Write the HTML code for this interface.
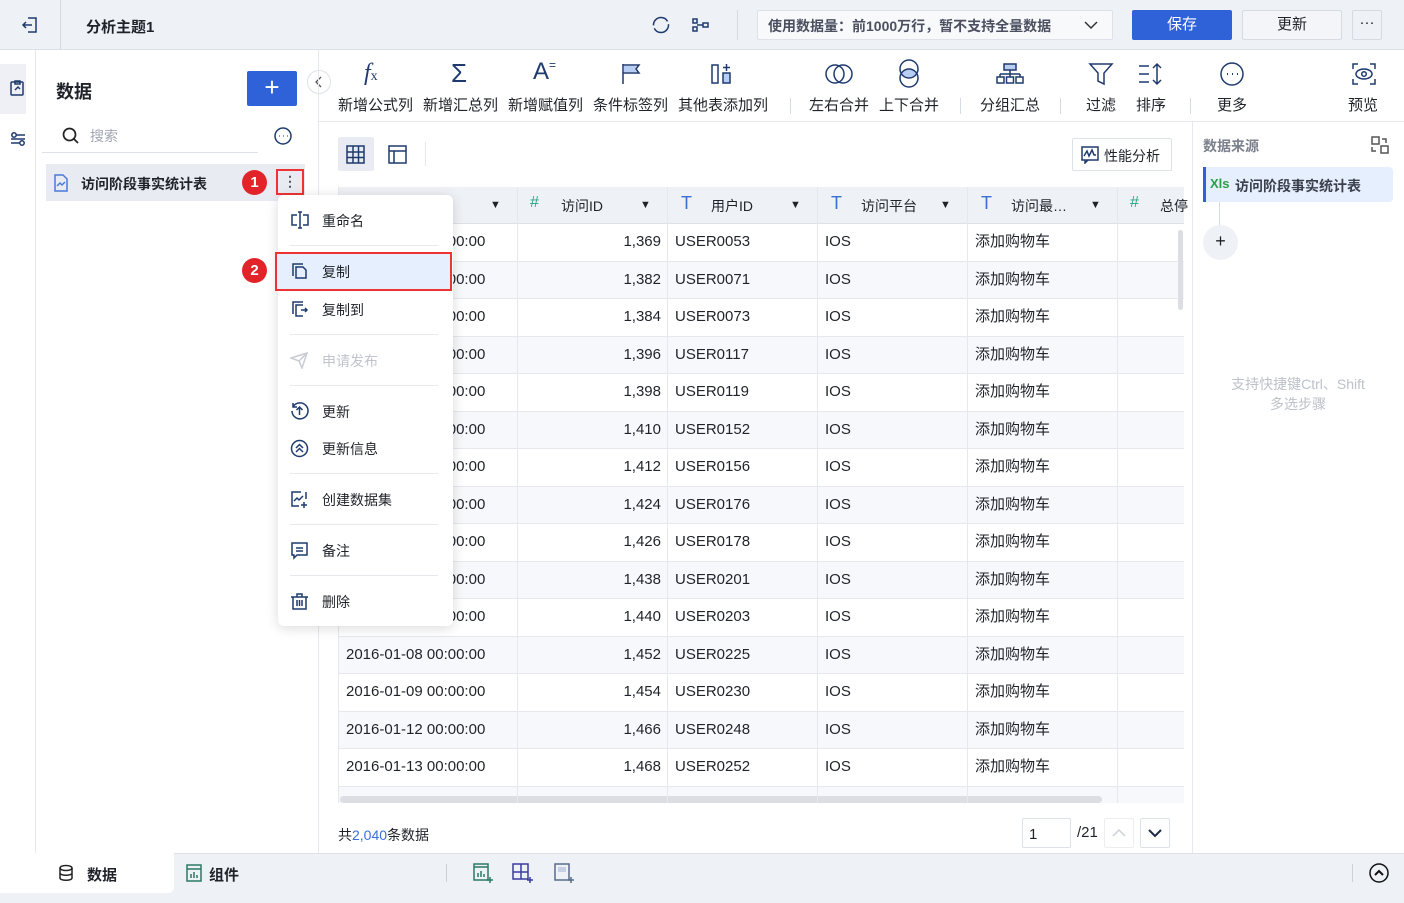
<!DOCTYPE html>
<html><head><meta charset="utf-8"><style>
*{box-sizing:border-box;margin:0;padding:0}
body{width:1404px;height:903px;overflow:hidden;background:#fff;font-family:"Liberation Sans","Noto Sans CJK SC",sans-serif;font-size:14px;color:#1f2329;position:relative}
.a{position:absolute}
svg{position:absolute;fill:none;stroke:#1e3a6e;stroke-width:1.5}
.tb{position:absolute;top:96px;font-size:15px;line-height:20px;color:#1f2329;white-space:nowrap}
.row{position:absolute;left:338px;width:846px;height:37.5px;border-bottom:1px solid #e6e8ee;font-size:15px}
.row.alt{background:#f7f8fb}
.row span{position:absolute;top:0;line-height:36px;white-space:nowrap}
.c1{left:8px}.c2{left:179px;width:144px;text-align:right}.c3{left:337px}.c4{left:487px}.c5{left:637px}
.vl{position:absolute;top:187px;height:616px;width:1px;background:#e6e8ee}
.mi{position:absolute;left:322px;font-size:14px;color:#1f2329}
.dv{position:absolute;left:290px;width:148px;height:1px;background:#e6e8ee}
.hd{position:absolute;top:196px;font-size:14px;white-space:nowrap}
</style></head><body>
<!-- top bar -->
<div class="a" style="left:0;top:0;width:1404px;height:50px;background:#eef1f6;border-bottom:1px solid #dde1e8"></div>
<div class="a" style="left:60px;top:0;width:1px;height:50px;background:#d6dae2"></div>
<svg style="left:20px;top:15px" width="20" height="20" viewBox="0 0 20 20"><path d="M8 3h8v14H8M3 10h9M6 7l-3 3 3 3"/></svg>
<div class="a" style="left:86px;top:16px;font-size:15px;font-weight:bold">分析主题1</div>
<svg style="left:651px;top:15px" width="20" height="20" viewBox="0 0 20 20"><circle cx="10" cy="10" r="7.5" stroke-dasharray="20 3"/></svg>
<svg style="left:691px;top:15px" width="20" height="20" viewBox="0 0 20 20"><rect x="2" y="4" width="4" height="4"/><rect x="2" y="12" width="4" height="4"/><path d="M6 10h6"/><rect x="12" y="8" width="5" height="4"/></svg>
<div class="a" style="left:737px;top:10px;width:1px;height:30px;background:#d6dae2"></div>
<div class="a" style="left:757px;top:10px;width:356px;height:30px;background:#f8f9fb;border:1px solid #dde1e8;border-radius:2px;font-size:14px;color:#4a5060;padding:5px 10px;font-weight:bold">使用数据量：前1000万行，暂不支持全量数据</div>
<svg style="left:1082px;top:16px" width="18" height="18" viewBox="0 0 18 18"><path d="M3 6l6 6 6-6" stroke="#333"/></svg>
<div class="a" style="left:1132px;top:10px;width:100px;height:30px;background:#2f62d8;border-radius:2px;color:#fff;text-align:center;line-height:30px;font-size:15px">保存</div>
<div class="a" style="left:1242px;top:10px;width:100px;height:30px;background:#f4f5f8;border:1px solid #d6dae2;border-radius:2px;text-align:center;line-height:28px;font-size:15px">更新</div>
<div class="a" style="left:1352px;top:10px;width:30px;height:30px;border:1px solid #d6dae2;border-radius:2px;text-align:center;line-height:24px;font-size:15px">···</div>
<!-- left rail -->
<div class="a" style="left:0;top:50px;width:36px;height:803px;background:#fff;border-right:1px solid #e6e8ee"></div>
<div class="a" style="left:0;top:64px;width:26px;height:50px;background:#eef0f5"></div>
<svg style="left:9px;top:79px" width="18" height="18" viewBox="0 0 18 18"><rect x="2" y="3" width="12" height="13" rx="1"/><path d="M6 2h5v3H6zM6 11l3-3 2 2"/></svg>
<svg style="left:9px;top:130px" width="18" height="18" viewBox="0 0 18 18"><circle cx="5" cy="5" r="2.2"/><circle cx="13" cy="13" r="2.2"/><path d="M7 5h9M2 13h9M2 9h14"/></svg>
<!-- left panel -->
<div class="a" style="left:56px;top:78px;font-size:18px;font-weight:bold">数据</div>
<div class="a" style="left:247px;top:71px;width:50px;height:35px;background:#2f62d8;border-radius:2px;color:#fff;text-align:center;line-height:33px;font-size:26px">+</div>
<div class="a" style="left:307px;top:70px;width:24px;height:24px;border:1px solid #dde1e8;border-radius:12px;background:#fff"></div>
<svg style="left:313px;top:76px" width="12" height="12" viewBox="0 0 12 12"><path d="M8 1L3 6l5 5" stroke="#555" stroke-width="1.3"/></svg>
<svg style="left:61px;top:126px" width="20" height="20" viewBox="0 0 20 20"><circle cx="8.5" cy="8.5" r="6" stroke="#222" stroke-width="1.7"/><path d="M13 13l4 4" stroke="#222" stroke-width="1.7"/></svg>
<div class="a" style="left:90px;top:126px;color:#a0a6b1;font-size:14px">搜索</div>
<div class="a" style="left:42px;top:152px;width:216px;height:1px;background:#dde1e8"></div>
<svg style="left:273px;top:126px" width="20" height="20" viewBox="0 0 20 20"><circle cx="10" cy="10" r="8"/><path d="M6 10h.5M10 10h.5M14 10h.5" stroke-width="2"/></svg>
<div class="a" style="left:46px;top:164px;width:259px;height:37px;background:#e8ebf2"></div>
<svg style="left:53px;top:174px" width="16" height="18" viewBox="0 0 16 18"><path d="M2 1h8l4 4v12H2z" stroke="#4a7bd8"/><path d="M4 12l3-3 2 2 3-3" stroke="#4a7bd8"/></svg>
<div class="a" style="left:81px;top:174px;font-size:14px;font-weight:bold">访问阶段事实统计表</div>
<div class="a" style="left:242px;top:170px;width:25px;height:25px;border-radius:13px;background:#e2242a;color:#fff;text-align:center;line-height:25px;font-size:15px;font-weight:bold">1</div>
<div class="a" style="left:276px;top:169px;width:28px;height:26px;border:2px solid #e33;text-align:center;line-height:20px;color:#555;font-weight:bold">⋮</div>
<div class="a" style="left:318px;top:50px;width:1px;height:803px;background:#e6e8ee"></div>
<!-- toolbar -->
<div class="a" style="left:319px;top:121px;width:1085px;height:1px;background:#e6e8ee"></div>
<div class="a" style="left:364px;top:60px;font-size:24px;font-style:italic;font-family:'Liberation Serif',serif;color:#1e3a6e">f<span style="font-size:14px;font-style:normal">x</span></div>
<div class="a" style="left:451px;top:58px;font-size:26px;color:#1e3a6e">Σ</div>
<div class="a" style="left:533px;top:58px;font-size:24px;color:#1e3a6e">A<span style="font-size:12px;vertical-align:top">=</span></div>
<svg style="left:620px;top:62px" width="22" height="24" viewBox="0 0 22 24"><path d="M4 4h13l-2 3 2 3H4z" fill="#b8cdf2" stroke="none"/><path d="M3 2v20M3 3h16l-3 4 3 4H3" /></svg>
<svg style="left:710px;top:62px" width="26" height="24" viewBox="0 0 26 24"><rect x="2" y="3" width="6" height="18"/><rect x="13" y="11" width="7" height="10" fill="#b8cdf2"/><path d="M16.5 2v7M13 5.5h7"/></svg>
<svg style="left:825px;top:61px" width="28" height="26" viewBox="0 0 28 26"><circle cx="10" cy="13" r="9"/><circle cx="18" cy="13" r="9"/></svg>
<svg style="left:896px;top:59px" width="26" height="30" viewBox="0 0 26 30"><ellipse cx="13" cy="14.5" rx="8" ry="4" fill="#b8cdf2" stroke="none"/><circle cx="13" cy="10" r="9"/><circle cx="13" cy="19" r="9"/></svg>
<svg style="left:996px;top:62px" width="28" height="24" viewBox="0 0 28 24"><rect x="8" y="2" width="12" height="6" fill="#b8cdf2"/><path d="M14 8v4M4 12h20M4 12v3M24 12v3M14 12v3"/><rect x="1" y="15" width="7" height="6"/><rect x="20" y="15" width="7" height="6"/><rect x="10.5" y="15" width="7" height="6"/></svg>
<svg style="left:1088px;top:62px" width="26" height="24" viewBox="0 0 26 24"><path d="M2 2h22l-8 9v11l-6-3v-8z"/></svg>
<svg style="left:1137px;top:62px" width="28" height="24" viewBox="0 0 28 24"><path d="M2 4h10M2 12h10M2 20h10M20 2v20M16 6l4-4 4 4M16 18l4 4 4-4"/></svg>
<svg style="left:1219px;top:61px" width="26" height="26" viewBox="0 0 26 26"><circle cx="13" cy="13" r="11"/><path d="M8 13h1M13 13h1M18 13h1" stroke-width="2"/></svg>
<svg style="left:1351px;top:62px" width="26" height="24" viewBox="0 0 26 24"><path d="M2 7V2h5M19 2h5v5M24 17v5h-5M7 22H2v-5"/><ellipse cx="13" cy="12" rx="8" ry="5"/><circle cx="13" cy="12" r="2.3"/></svg>
<div class="tb" style="left:338px">新增公式列</div><div class="tb" style="left:423px">新增汇总列</div><div class="tb" style="left:508px">新增赋值列</div><div class="tb" style="left:593px">条件标签列</div><div class="tb" style="left:678px">其他表添加列</div>
<div class="a" style="left:790px;top:98px;width:1px;height:16px;background:#d6dae2"></div>
<div class="tb" style="left:809px">左右合并</div><div class="tb" style="left:879px">上下合并</div>
<div class="a" style="left:960px;top:98px;width:1px;height:16px;background:#d6dae2"></div>
<div class="tb" style="left:980px">分组汇总</div>
<div class="a" style="left:1060px;top:98px;width:1px;height:16px;background:#d6dae2"></div>
<div class="tb" style="left:1086px">过滤</div><div class="tb" style="left:1136px">排序</div>
<div class="a" style="left:1190px;top:98px;width:1px;height:16px;background:#d6dae2"></div>
<div class="tb" style="left:1217px">更多</div><div class="tb" style="left:1348px">预览</div>
<!-- view toggles -->
<div class="a" style="left:338px;top:137px;width:36px;height:34px;background:#e8ebf2;border-radius:2px"></div>
<svg style="left:346px;top:145px" width="19" height="19" viewBox="0 0 19 19"><rect x="1" y="1" width="17" height="17"/><path d="M1 7h17M1 12.5h17M7 1v17M12.5 1v17"/></svg>
<svg style="left:388px;top:145px" width="19" height="19" viewBox="0 0 19 19"><rect x="1" y="1" width="17" height="17"/><path d="M1 6h17M6 6v12"/></svg>
<div class="a" style="left:425px;top:142px;width:1px;height:24px;background:#e6e8ee"></div>
<div class="a" style="left:1072px;top:138px;width:100px;height:33px;border:1px solid #dde1e8;border-radius:2px;background:#fff"></div>
<svg style="left:1081px;top:146px" width="18" height="18" viewBox="0 0 18 18"><rect x="1" y="1" width="16" height="13"/><path d="M3 10l3-5 2 5 3-6 2 5h2M4 14v3l3-3"/></svg>
<div class="a" style="left:1104px;top:146px;font-size:14px">性能分析</div>
<!-- table -->
<div class="a" style="left:338px;top:187px;width:846px;height:37px;background:#eef1f6;border-bottom:1px solid #dde1e8"></div>
<div class="hd" style="left:490px;font-size:11px;top:199px">▼</div>
<div class="hd" style="left:530px;color:#2aa58a;font-size:16px;top:194px">#</div><div class="hd" style="left:561px">访问ID</div><div class="hd" style="left:640px;font-size:11px;top:199px">▼</div>
<div class="hd" style="left:681px;color:#3b6fd8;font-size:18px;top:193px">T</div><div class="hd" style="left:711px">用户ID</div><div class="hd" style="left:790px;font-size:11px;top:199px">▼</div>
<div class="hd" style="left:831px;color:#3b6fd8;font-size:18px;top:193px">T</div><div class="hd" style="left:861px">访问平台</div><div class="hd" style="left:940px;font-size:11px;top:199px">▼</div>
<div class="hd" style="left:981px;color:#3b6fd8;font-size:18px;top:193px">T</div><div class="hd" style="left:1011px">访问最…</div><div class="hd" style="left:1090px;font-size:11px;top:199px">▼</div>
<div class="hd" style="left:1130px;color:#2aa58a;font-size:16px;top:194px">#</div><div class="hd" style="left:1160px">总停</div>
<div style="position:absolute;left:0;top:0;width:1184px;height:803px;overflow:hidden">
<div class="row" style="top:224px"><span class="c1">2016-01-01 00:00:00</span><span class="c2">1,369</span><span class="c3">USER0053</span><span class="c4">IOS</span><span class="c5">添加购物车</span></div>
<div class="row alt" style="top:261.5px"><span class="c1">2016-01-01 00:00:00</span><span class="c2">1,382</span><span class="c3">USER0071</span><span class="c4">IOS</span><span class="c5">添加购物车</span></div>
<div class="row" style="top:299px"><span class="c1">2016-01-01 00:00:00</span><span class="c2">1,384</span><span class="c3">USER0073</span><span class="c4">IOS</span><span class="c5">添加购物车</span></div>
<div class="row alt" style="top:336.5px"><span class="c1">2016-01-02 00:00:00</span><span class="c2">1,396</span><span class="c3">USER0117</span><span class="c4">IOS</span><span class="c5">添加购物车</span></div>
<div class="row" style="top:374px"><span class="c1">2016-01-02 00:00:00</span><span class="c2">1,398</span><span class="c3">USER0119</span><span class="c4">IOS</span><span class="c5">添加购物车</span></div>
<div class="row alt" style="top:411.5px"><span class="c1">2016-01-03 00:00:00</span><span class="c2">1,410</span><span class="c3">USER0152</span><span class="c4">IOS</span><span class="c5">添加购物车</span></div>
<div class="row" style="top:449px"><span class="c1">2016-01-03 00:00:00</span><span class="c2">1,412</span><span class="c3">USER0156</span><span class="c4">IOS</span><span class="c5">添加购物车</span></div>
<div class="row alt" style="top:486.5px"><span class="c1">2016-01-04 00:00:00</span><span class="c2">1,424</span><span class="c3">USER0176</span><span class="c4">IOS</span><span class="c5">添加购物车</span></div>
<div class="row" style="top:524px"><span class="c1">2016-01-04 00:00:00</span><span class="c2">1,426</span><span class="c3">USER0178</span><span class="c4">IOS</span><span class="c5">添加购物车</span></div>
<div class="row alt" style="top:561.5px"><span class="c1">2016-01-05 00:00:00</span><span class="c2">1,438</span><span class="c3">USER0201</span><span class="c4">IOS</span><span class="c5">添加购物车</span></div>
<div class="row" style="top:599px"><span class="c1">2016-01-05 00:00:00</span><span class="c2">1,440</span><span class="c3">USER0203</span><span class="c4">IOS</span><span class="c5">添加购物车</span></div>
<div class="row alt" style="top:636.5px"><span class="c1">2016-01-08 00:00:00</span><span class="c2">1,452</span><span class="c3">USER0225</span><span class="c4">IOS</span><span class="c5">添加购物车</span></div>
<div class="row" style="top:674px"><span class="c1">2016-01-09 00:00:00</span><span class="c2">1,454</span><span class="c3">USER0230</span><span class="c4">IOS</span><span class="c5">添加购物车</span></div>
<div class="row alt" style="top:711.5px"><span class="c1">2016-01-12 00:00:00</span><span class="c2">1,466</span><span class="c3">USER0248</span><span class="c4">IOS</span><span class="c5">添加购物车</span></div>
<div class="row" style="top:749px"><span class="c1">2016-01-13 00:00:00</span><span class="c2">1,468</span><span class="c3">USER0252</span><span class="c4">IOS</span><span class="c5">添加购物车</span></div>
<div class="row alt" style="top:786.5px"><span class="c1">2016-01-19 00:00:00</span><span class="c2">1,480</span><span class="c3">USER0310</span><span class="c4">IOS</span><span class="c5">添加购物车</span></div>
<div class="a" style="left:340px;top:796px;width:762px;height:7px;border-radius:4px;background:#dcdee3"></div>
</div>
<div class="vl" style="left:338px"></div><div class="vl" style="left:517px"></div><div class="vl" style="left:667px"></div><div class="vl" style="left:817px"></div><div class="vl" style="left:967px"></div><div class="vl" style="left:1117px"></div>
<div class="a" style="left:1178px;top:230px;width:5px;height:80px;border-radius:3px;background:#dcdee3"></div>
<!-- footer -->
<div class="a" style="left:338px;top:825px;font-size:14px">共<span style="color:#3b6fd8">2,040</span>条数据</div>
<div class="a" style="left:1022px;top:818px;width:49px;height:30px;border:1px solid #dde1e8;border-radius:2px;padding:7px 6px;font-size:15px">1</div>
<div class="a" style="left:1077px;top:824px;font-size:15px">/21</div>
<div class="a" style="left:1104px;top:818px;width:30px;height:30px;border:1px solid #eceef2;border-radius:2px"></div>
<svg style="left:1111px;top:825px" width="16" height="16" viewBox="0 0 16 16"><path d="M2 11l6-6 6 6" stroke="#ccd0d8"/></svg>
<div class="a" style="left:1140px;top:818px;width:30px;height:30px;border:1px solid #dde1e8;border-radius:2px"></div>
<svg style="left:1147px;top:825px" width="16" height="16" viewBox="0 0 16 16"><path d="M2 5l6 6 6-6" stroke="#1e2a44" stroke-width="2"/></svg>
<!-- right panel -->
<div class="a" style="left:1192px;top:122px;width:1px;height:731px;background:#e6e8ee"></div>
<div class="a" style="left:1203px;top:136px;font-size:14px;color:#7a808c;font-weight:bold">数据来源</div>
<svg style="left:1371px;top:136px" width="18" height="18" viewBox="0 0 18 18"><rect x="1" y="1" width="7" height="7" stroke="#555"/><rect x="10" y="10" width="7" height="7" stroke="#555"/><path d="M11 3h4v4M1 11v4h4" stroke="#555"/></svg>
<div class="a" style="left:1203px;top:167px;width:190px;height:35px;background:#e6effd;border-left:3px solid #2f62d8;border-radius:0 4px 4px 0"></div>
<div class="a" style="left:1210px;top:176px;font-size:13px;color:#2aa046;font-weight:bold">Xls</div>
<div class="a" style="left:1235px;top:176px;font-size:14px;color:#3a3f4b;font-weight:bold">访问阶段事实统计表</div>
<div class="a" style="left:1219px;top:202px;width:1px;height:24px;background:#d6dae2"></div>
<div class="a" style="left:1203px;top:225px;width:35px;height:35px;border-radius:18px;background:#eef1f6;text-align:center;line-height:33px;font-size:18px">+</div>
<div class="a" style="left:1203px;top:374px;width:190px;text-align:center;font-size:14px;color:#bcc1ca;line-height:20px">支持快捷键Ctrl、Shift<br>多选步骤</div>
<!-- bottom bar -->
<div class="a" style="left:0;top:853px;width:1404px;height:50px;background:#eef1f6;border-top:1px solid #dde1e8"></div>
<div class="a" style="left:0;top:853px;width:174px;height:40px;background:#fff;border-radius:0 0 6px 0"></div>
<svg style="left:58px;top:864px" width="16" height="18" viewBox="0 0 16 18"><ellipse cx="8" cy="4" rx="6" ry="2.5" stroke="#222"/><path d="M2 4v10c0 3 12 3 12 0V4M2 9c0 3 12 3 12 0" stroke="#222"/></svg>
<div class="a" style="left:87px;top:864px;font-size:15px;font-weight:bold">数据</div>
<svg style="left:186px;top:864px" width="16" height="18" viewBox="0 0 16 18"><rect x="1" y="1" width="14" height="16" stroke="#2a7a66"/><path d="M1 5h14M5 14v-4M8 14V8M11 14v-3" stroke="#2a7a66"/></svg>
<div class="a" style="left:209px;top:864px;font-size:15px;font-weight:bold">组件</div>
<div class="a" style="left:446px;top:864px;width:1px;height:18px;background:#ccd0d8"></div>
<svg style="left:473px;top:862px" width="22" height="22" viewBox="0 0 22 22"><rect x="1" y="2" width="14" height="16" stroke="#2a7a66"/><path d="M1 5h14M5 15v-4M8 15V9M11 15v-3M17 15v6M14 18h6" stroke="#2a7a66"/></svg>
<svg style="left:512px;top:862px" width="22" height="22" viewBox="0 0 22 22"><rect x="1" y="2" width="15" height="15" stroke="#3a3aa0"/><path d="M1 10h15M9 2v15M18 15v6M15 18h6" stroke="#3a3aa0"/></svg>
<svg style="left:554px;top:862px" width="22" height="22" viewBox="0 0 22 22"><rect x="1" y="2" width="14" height="16" stroke="#5a6a8a"/><rect x="4" y="5" width="8" height="5" fill="#c5d0e4" stroke="none"/><path d="M17 15v6M14 18h6" stroke="#5a6a8a"/></svg>
<div class="a" style="left:1352px;top:864px;width:1px;height:18px;background:#ccd0d8"></div>
<svg style="left:1368px;top:862px" width="22" height="22" viewBox="0 0 22 22"><circle cx="11" cy="11" r="9" stroke="#111"/><path d="M7 13l4-4 4 4" stroke="#111" stroke-width="2"/></svg>
<!-- context menu -->
<div class="a" style="left:278px;top:195px;width:175px;height:431px;background:#fff;border-radius:6px;box-shadow:0 2px 12px rgba(0,0,0,.15)"></div>
<svg style="left:290px;top:211px" width="20" height="18" viewBox="0 0 20 18"><path d="M7 4H2v10h5M13 4h5v10h-5M10 1v16M8 1h4M8 17h4"/></svg>
<div class="mi" style="top:211px">重命名</div>
<div class="dv" style="top:245px"></div>
<div class="a" style="left:275px;top:252px;width:177px;height:39px;background:#e6effd;border:2px solid #e33"></div>
<svg style="left:291px;top:262px" width="18" height="18" viewBox="0 0 18 18"><path d="M2 14V2h10"/><path d="M5 5h7l3 3v8H5z"/></svg>
<div class="mi" style="top:262px">复制</div>
<div class="a" style="left:242px;top:258px;width:25px;height:25px;border-radius:13px;background:#e2242a;color:#fff;text-align:center;line-height:25px;font-size:15px;font-weight:bold">2</div>
<svg style="left:291px;top:300px" width="18" height="18" viewBox="0 0 18 18"><path d="M2 14V2h10"/><path d="M12 5H5v11h7M10 10h6M14 8l2 2-2 2"/></svg>
<div class="mi" style="top:300px">复制到</div>
<div class="dv" style="top:334px"></div>
<svg style="left:290px;top:351px" width="18" height="18" viewBox="0 0 18 18"><path d="M1 7l16-5-5 15-3-7z M9 10l8-8" stroke="#c8ccd4"/></svg>
<div class="mi" style="top:351px;color:#c0c4cc">申请发布</div>
<div class="dv" style="top:385px"></div>
<svg style="left:290px;top:401px" width="19" height="19" viewBox="0 0 19 19"><path d="M3 6a8 8 0 1 1-1 4M3 2v4h4M9.5 14V6M6.5 9l3-3 3 3"/></svg>
<div class="mi" style="top:402px">更新</div>
<svg style="left:290px;top:439px" width="19" height="19" viewBox="0 0 19 19"><circle cx="9.5" cy="9.5" r="8"/><path d="M6 9l3.5-3.5L13 9M6 13l3.5-3.5L13 13"/></svg>
<div class="mi" style="top:439px">更新信息</div>
<div class="dv" style="top:473px"></div>
<svg style="left:290px;top:490px" width="19" height="19" viewBox="0 0 19 19"><path d="M11 2H2v14h7M16 2v7"/><path d="M4 11l3-3 2 2 4-4M14 12v6M11 15h6"/></svg>
<div class="mi" style="top:490px">创建数据集</div>
<div class="dv" style="top:524px"></div>
<svg style="left:290px;top:541px" width="19" height="19" viewBox="0 0 19 19"><path d="M2 2h15v12H7l-3 3v-3H2zM6 7h7M6 10h7"/></svg>
<div class="mi" style="top:541px">备注</div>
<div class="dv" style="top:575px"></div>
<svg style="left:290px;top:592px" width="19" height="19" viewBox="0 0 19 19"><path d="M1 5h17M7 5V2h5v3M3 5v12h13V5M7 8v6M9.5 8v6M12 8v6"/></svg>
<div class="mi" style="top:592px">删除</div>
</body></html>
